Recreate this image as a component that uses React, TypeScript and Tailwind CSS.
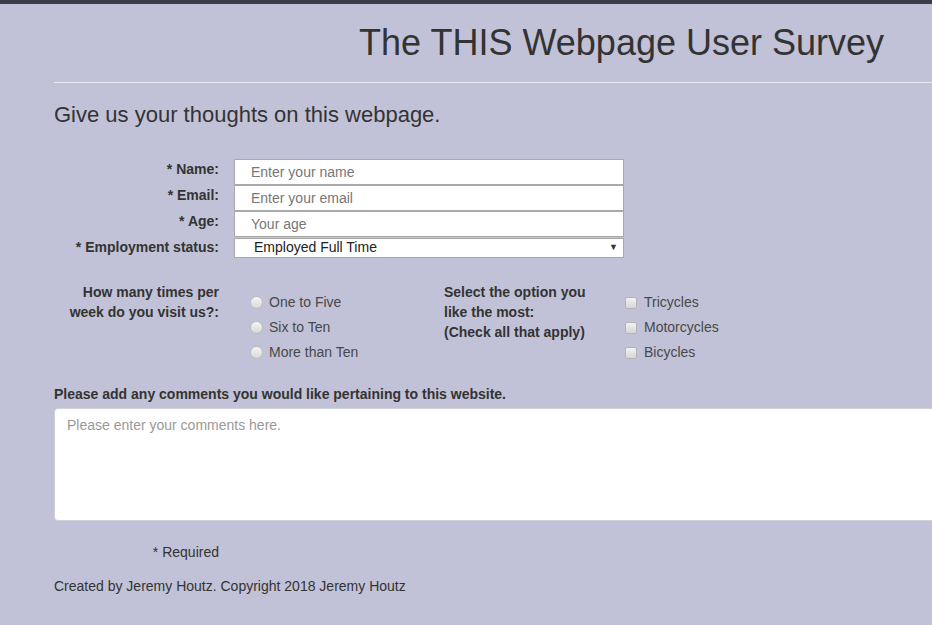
import React from 'react';

const font = { fontFamily: '"Liberation Sans", Arial, sans-serif' };

function Field({ label, placeholder }: { label: string; placeholder: string }) {
  return (
    <div className="flex items-center">
      <label className="w-[165px] shrink-0 text-right text-[14px] font-bold text-[#333] -mt-[5px]">{label}</label>
      <input
        className="ml-[15px] h-[26px] w-[390px] border border-[#a9a9a9] bg-white pl-[16px] text-[14px] text-[#555] placeholder:text-[#777] outline-none"
        placeholder={placeholder}
        style={font}
      />
    </div>
  );
}

function Radio({ label }: { label: string }) {
  return (
    <div className="flex h-[25px] items-center">
      <span className="h-[13px] w-[13px] rounded-full border border-[#bcbcbc] bg-gradient-to-b from-[#f6f6f6] to-[#d8d8d8]" />
      <span className="ml-[6px] text-[14px] text-[#484848]">{label}</span>
    </div>
  );
}

function Check({ label }: { label: string }) {
  return (
    <div className="flex h-[25px] items-center">
      <span className="h-[12px] w-[12px] rounded-[2px] border border-[#b4b4b4] bg-gradient-to-b from-[#f2f2f2] to-[#d6d6d6]" />
      <span className="ml-[7px] text-[14px] text-[#484848]">{label}</span>
    </div>
  );
}

export default function App() {
  return (
    <div className="min-h-[625px] w-[932px] overflow-hidden bg-[#c1c2d7] text-[#333]" style={font}>
      <div className="h-[4px] bg-[#3c3c4a]" />
      <h1 className="pr-[48px] pt-[18px] text-right text-[36px] leading-[42px] text-[#333]">The THIS Webpage User Survey</h1>
      <div className="ml-[54px] mt-[18px] h-px bg-[#e8e8f0]" />
      <div className="pl-[54px]">
        <h2 className="mt-[18px] text-[22px] leading-[28px] text-[#333]">Give us your thoughts on this webpage.</h2>

        <div className="mt-[30px] flex flex-col">
          <Field label="* Name:" placeholder="Enter your name" />
          <Field label="* Email:" placeholder="Enter your email" />
          <Field label="* Age:" placeholder="Your age" />
          <div className="flex items-center">
            <label className="w-[165px] shrink-0 text-right text-[14px] font-bold text-[#333]">* Employment status:</label>
            <div className="ml-[15px] flex h-[20px] w-[390px] items-center justify-between border border-[#a9a9a9] bg-white pl-[19px] pr-[5px] text-[14px] text-[#222]">
              <span>Employed Full Time</span>
              <span className="text-[9px] text-[#333]">▼</span>
            </div>
          </div>
        </div>

        <div className="mt-[24px] flex">
          <div className="w-[165px] text-right text-[14px] font-bold leading-[20px] text-[#333]">
            How many times per<br />week do you visit us?:
          </div>
          <div className="ml-[31px] mt-[8px] w-[194px]">
            <Radio label="One to Five" />
            <Radio label="Six to Ten" />
            <Radio label="More than Ten" />
          </div>
          <div className="w-[181px] text-[14px] font-bold leading-[20px] text-[#333]">
            Select the option you<br />like the most:<br />(Check all that apply)
          </div>
          <div className="mt-[8px]">
            <Check label="Tricycles" />
            <Check label="Motorcycles" />
            <Check label="Bicycles" />
          </div>
        </div>

        <p className="mt-[19px] text-[14px] font-bold leading-[20px] text-[#333]">Please add any comments you would like pertaining to this website.</p>
        <textarea
          className="mt-[4px] block h-[113px] w-[900px] resize-none rounded-[4px] border border-[#d0d0d8] bg-white px-[12px] py-[6px] text-[14px] text-[#555] placeholder:text-[#999] outline-none"
          placeholder="Please enter your comments here."
          style={font}
        />

        <p className="mt-[21px] w-[165px] text-right text-[14px] leading-[20px] text-[#333]">* Required</p>
        <p className="mt-[14px] text-[14px] leading-[20px] text-[#333]">Created by Jeremy Houtz. Copyright 2018 Jeremy Houtz</p>
      </div>
    </div>
  );
}
